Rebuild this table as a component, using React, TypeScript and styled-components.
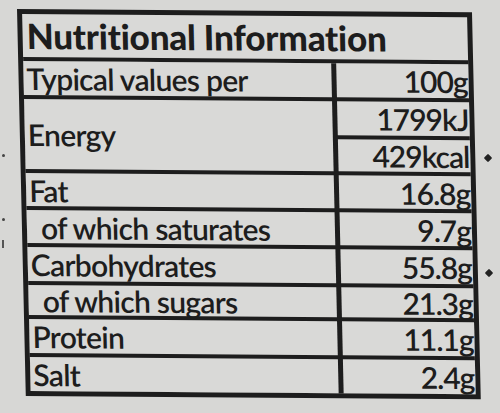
import { Fragment } from 'react'
import styled, { createGlobalStyle } from 'styled-components'

type Row = {
  label?: string
  value: string
  height: number
  indent?: boolean
  span?: number
}

const rows: Row[] = [
  { label: 'Typical values per', value: '100g', height: 34 },
  { label: 'Energy', value: '1799kJ', height: 34, span: 2 },
  { value: '429kcal', height: 32 },
  { label: 'Fat', value: '16.8g', height: 33 },
  { label: 'of which saturates', value: '9.7g', height: 33, indent: true },
  { label: 'Carbohydrates', value: '55.8g', height: 34 },
  { label: 'of which sugars', value: '21.3g', height: 30, indent: true },
  { label: 'Protein', value: '11.1g', height: 34 },
  { label: 'Salt', value: '2.4g', height: 34 }
]

const GlobalStyle = createGlobalStyle`
  html, body {
    margin: 0;
    padding: 0;
    background: #d7d7d5;
  }
`

const App = () => {
  return (
    <Page>
      <GlobalStyle />
      <Label>
        <Title>Nutritional Information</Title>
        <Table style={{ gridTemplateRows: rows.map((r) => `${r.height}px`).join(' ') }}>
          {rows.map((row, i) => (
            <Fragment key={i}>
              {row.label ? (
                <NameCell $indent={row.indent} $span={row.span ?? 1}>
                  {row.label}
                </NameCell>
              ) : null}
              <ValueCell>{row.value}</ValueCell>
            </Fragment>
          ))}
        </Table>
      </Label>
      {/* specks on the paper around the printed label */}
      <Dot $x={485} $y={155} />
      <Dot $x={486} $y={270} />
      <Speck $x={2} $y={154} />
      <Speck $x={2} $y={218} />
      <Tick $x={2} $y={240} />
    </Page>
  )
}

export default App

const Page = styled.div`
  position: relative;
  width: 500px;
  height: 413px;
  overflow: hidden;
  padding: 9px 0 0 17px;
  box-sizing: border-box;
  background: #d7d7d5;
  font-family: Lato, 'Open Sans', sans-serif;
  color: #1d1d1d;
`

const Label = styled.div`
  width: 455px;
  border: 5px solid #1d1d1d;
  box-sizing: border-box;
  transform-origin: top left;
  transform: rotate(0.4deg) skewX(1.7deg);
  background: #d9d9d7;
`

const Title = styled.div`
  height: 47px;
  display: flex;
  align-items: center;
  padding: 0 0 2px 4px;
  box-sizing: border-box;
  font-size: 35px;
  font-weight: 900;
  letter-spacing: -0.2px;
  border-bottom: 4px solid #1d1d1d;
`

const Table = styled.div`
  display: grid;
  grid-template-columns: 1fr 132px;
  gap: 4px 5px;
  background: #1d1d1d;
`

const Cell = styled.div`
  background: #d9d9d7;
  display: flex;
  align-items: center;
  font-size: 30px;
  font-weight: 600;
  letter-spacing: -0.7px;
  line-height: 1;
  white-space: nowrap;
`

const NameCell = styled(Cell)<{ $indent?: boolean; $span: number }>`
  grid-column: 1;
  grid-row: span ${({ $span }) => $span};
  padding-left: ${({ $indent }) => ($indent ? '14px' : '3px')};
`

const ValueCell = styled(Cell)`
  grid-column: 2;
  justify-content: flex-end;
  padding-right: 1px;
  letter-spacing: -1px;
`

const Dot = styled.span<{ $x: number; $y: number }>`
  position: absolute;
  left: ${({ $x }) => $x}px;
  top: ${({ $y }) => $y}px;
  width: 6px;
  height: 6px;
  background: #222;
  transform: rotate(45deg);
  border-radius: 1px;
`

const Speck = styled.span<{ $x: number; $y: number }>`
  position: absolute;
  left: ${({ $x }) => $x}px;
  top: ${({ $y }) => $y}px;
  width: 3px;
  height: 3px;
  border-radius: 50%;
  background: #444;
`

const Tick = styled.span<{ $x: number; $y: number }>`
  position: absolute;
  left: ${({ $x }) => $x}px;
  top: ${({ $y }) => $y}px;
  width: 2px;
  height: 8px;
  background: #555;
`
